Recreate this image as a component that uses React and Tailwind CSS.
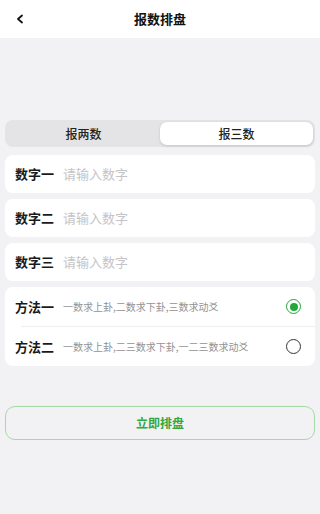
import React, { useState } from 'react';

const font = { fontFamily: '"Noto Sans CJK SC", "Noto Sans", sans-serif' };

const Radio = ({ checked }) => (
    <div
        className={`w-[15px] h-[15px] rounded-full flex items-center justify-center ${
            checked ? 'border-[1.5px] border-[#22a83a]' : 'border-[1.5px] border-[#333333]'
        }`}
    >
        {checked && <div className="w-[8px] h-[8px] rounded-full bg-[#22a83a]"></div>}
    </div>
);

const App = () => {
    const [tab, setTab] = useState(1);
    const [method, setMethod] = useState(0);

    const inputs = ['数字一', '数字二', '数字三'];
    const methods = [
        { label: '方法一', desc: '一数求上卦,二数求下卦,三数求动爻' },
        { label: '方法二', desc: '一数求上卦,二三数求下卦,一二三数求动爻' },
    ];

    return (
        <div className="min-h-[514px] bg-[#f2f2f4]" style={font}>
            {/* Header */}
            <div className="h-[38px] bg-white flex items-center relative">
                <svg className="ml-[15px] w-[10px] h-[10px]" viewBox="0 0 10 10" fill="none">
                    <path d="M7 1.5L3 5l4 3.5" stroke="#111" strokeWidth="1.8" strokeLinecap="round" strokeLinejoin="round" />
                </svg>
                <div className="absolute left-0 right-0 text-center text-[13px] font-bold text-[#111] pointer-events-none">
                    报数排盘
                </div>
            </div>

            <div className="px-[5px] pt-[82px]">
                {/* Segment */}
                <div className="h-[27px] rounded-lg bg-[#e4e4e6] p-[2px] flex">
                    {['报两数', '报三数'].map((t, i) => (
                        <button
                            key={t}
                            onClick={() => setTab(i)}
                            className={`flex-1 rounded-[7px] text-[12px] font-medium text-[#222] ${
                                tab === i ? 'bg-white shadow-[0_1px_3px_rgba(0,0,0,0.15)]' : ''
                            }`}
                        >
                            {t}
                        </button>
                    ))}
                </div>

                {/* Inputs */}
                <div className="mt-[8px] flex flex-col gap-[6px]">
                    {inputs.map((label) => (
                        <div key={label} className="h-[38px] bg-white rounded-lg flex items-center px-[10px]">
                            <span className="text-[13px] font-bold text-[#1a1a1a] w-[48px] shrink-0">{label}</span>
                            <input
                                className="flex-1 min-w-0 text-[13px] outline-none placeholder:text-[#c4c4c6] bg-transparent"
                                placeholder="请输入数字"
                            />
                        </div>
                    ))}
                </div>

                {/* Methods */}
                <div className="mt-[6px] bg-white rounded-lg">
                    {methods.map((m, i) => (
                        <div key={m.label} onClick={() => setMethod(i)} className="flex flex-col">
                            {i > 0 && <div className="ml-[16px] h-px bg-[#efeff1]"></div>}
                            <div className="h-[39px] flex items-center pl-[10px] pr-[14px]">
                                <span className="text-[13px] font-bold text-[#1a1a1a] w-[48px] shrink-0">{m.label}</span>
                                <span className="flex-1 text-[10px] text-[#929294] whitespace-nowrap">{m.desc}</span>
                                <Radio checked={method === i} />
                            </div>
                        </div>
                    ))}
                </div>

                {/* Submit */}
                <button className="mt-[40px] w-full h-[34px] rounded-[10px] border border-[#a6d8a8] text-[12px] font-bold text-[#2ea83f]">
                    立即排盘
                </button>
            </div>
        </div>
    );
};

export default App;
